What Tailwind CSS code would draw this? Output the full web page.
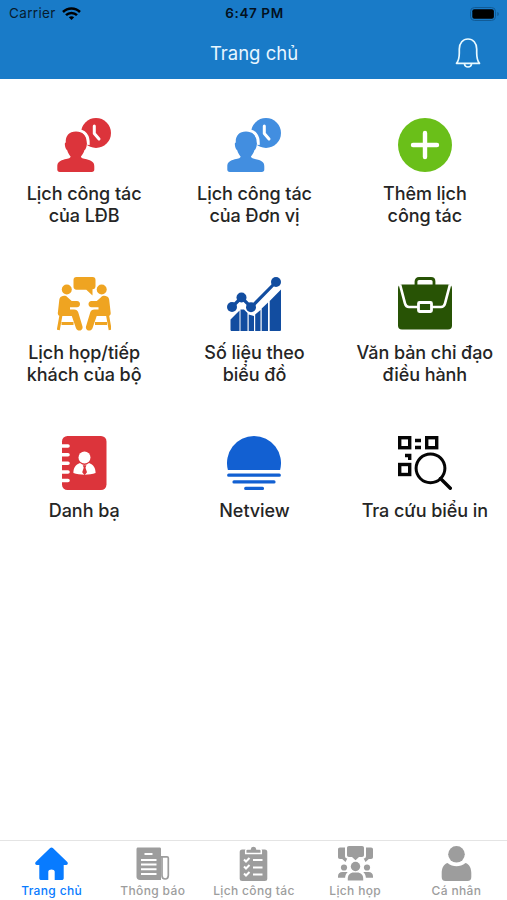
<!DOCTYPE html>
<html lang="vi">

<head>
    <meta charset="UTF-8">
    <meta name="viewport" content="width=device-width, initial-scale=1.0">
    <title>Trang chủ</title>
    <script src="https://cdn.jsdelivr.net/npm/@tailwindcss/browser@4"></script>
    <style>
        body {
            font-family: 'Inter', 'Liberation Sans', sans-serif;
        }
    </style>
</head>

<body class="bg-white h-screen flex flex-col overflow-hidden text-[#252525]">
    <!-- Header -->
    <header class="bg-[#197bc8] h-[79px] shrink-0">
        <!-- Status bar -->
        <div class="h-[27px] grid grid-cols-3 items-center pl-[9px] pr-[7px] text-[#071b2e]">
            <div class="flex items-center gap-[6px] text-[13.5px] tracking-[0.35px]">
                <span>Carrier</span>
                <svg class="w-[19px] h-[14px]" viewBox="0 0 19 14" fill="none" stroke="#000" stroke-width="2.5">
                    <path d="M1 5C5.7.3 13.3.3 18 5" />
                    <path d="M4 8.2c3-3 8-3 11 0" />
                    <path d="M6.8 10.3c1.5-1.4 3.9-1.4 5.4 0L9.5 13z" fill="#000" stroke="none" />
                </svg>
            </div>
            <div class="text-center text-[13.5px] font-semibold tracking-[0.6px] whitespace-nowrap text-[#03111e]">6:47 PM</div>
            <svg class="w-[30px] h-[14px] justify-self-end" viewBox="0 0 30 14">
                <rect x=".5" y=".5" width="25" height="13" rx="4" fill="none" stroke="#115b96" />
                <rect x="2.3" y="2.3" width="21.6" height="9.4" rx="2" />
                <path d="M27.3 5v4c2-.6 2-3.4 0-4z" fill="#115b96" />
            </svg>
        </div>
        <!-- Title -->
        <div class="h-[52px] grid grid-cols-[1fr_auto_1fr] items-center px-[26px]">
            <span></span>
            <h1 class="text-[18.5px] pt-px pl-px text-[#e8f6ff]">Trang chủ</h1>
            <svg class="w-[26px] h-[30px] justify-self-end" viewBox="0 0 26 30" fill="none" stroke="#e8f9ff" stroke-width="1.7" stroke-linejoin="round">
                <path d="M1.5 25.3C4 22.5 4.3 20.5 4.3 15V11C4.3 5 8 1 13 1s8.7 4 8.7 10v4c0 5.5.3 7.5 2.8 10.3z" />
                <path d="M9.5 26c.5 4 6.5 4 7 0" />
            </svg>
        </div>
    </header>

    <!-- Menu -->
    <main class="flex-1 -ml-px -mr-[3px] pt-[39px] grid grid-cols-3 auto-rows-[159px] text-center text-[18px] leading-[21.5px] tracking-[-0.06px] font-[460]">
        <div class="flex flex-col items-center gap-[11px]">
            <svg class="size-[54px] text-[#dc343b]" viewBox="0 0 54 54" fill="currentColor">
                <circle cx="39" cy="15" r="15" />
                <path d="M37.3 8v7.5l4.7 5.5" fill="none" stroke="#fff" stroke-width="3" stroke-linecap="round" stroke-linejoin="round" />
                <path d="M19 12.3c8.8 0 12.8 5.7 12.2 14.5" fill="none" stroke="#fff" stroke-width="3" />
                <path id="person" d="M19 13.5c-7 0-10.7 4.6-10.2 11-1 .4-1 1-.9 2.500.2 2.700 1.100 4.500 2.300 5.300.8 2.800 2 4.700 3.400 6.200-.4 2.200-3.300 2.200-7.200 3.200C1.500 43 .3 45.300.3 48.500v3c0 1.600.9 2.500 2.500 2.500h32c1.600 0 2.500-.9 2.500-2.500v-3c0-3.200-1.200-5.500-6.200-6.800-3.800-1-6.800-1-7.200-3.200 1.400-1.500 2.700-3.400 3.500-6.200 1.200-.8 2.100-2.600 2.300-5.300.1-1.500.1-2.100-.8-2.500.5-6.400-3.100-11-9.900-11z" />
            </svg>
            <p>Lịch công tác<br>của LĐB</p>
        </div>
        <div class="flex flex-col items-center gap-[11px]">
            <svg class="size-[54px] text-[#428ee0]" viewBox="0 0 54 54" fill="currentColor">
                <circle cx="39" cy="15" r="15" />
                <path d="M37.3 8v7.5l4.7 5.5" fill="none" stroke="#fff" stroke-width="3" stroke-linecap="round" stroke-linejoin="round" />
                <path d="M19 12.3c8.8 0 12.8 5.7 12.2 14.5" fill="none" stroke="#fff" stroke-width="3" />
                <use href="#person" />
            </svg>
            <p>Lịch công tác<br>của Đơn vị</p>
        </div>
        <div class="flex flex-col items-center gap-[11px]">
            <svg class="size-[54px]" viewBox="0 0 54 54">
                <circle cx="27" cy="27" r="27" fill="#6abf19" />
                <path d="M27 15v24M15 27h24" stroke="#fff" stroke-width="4.4" stroke-linecap="round" />
            </svg>
            <p>Thêm lịch<br>công tác</p>
        </div>
        <div class="flex flex-col items-center gap-[11px]">
            <svg class="size-[54px] text-[#efa421]" viewBox="0 0 54 54" fill="currentColor">
                <path d="M19.500 0h16c2 0 3 1.300 3 3v6c0 2-1 3.300-3 3.300v6.200l-6.200-5.700h-9.800c-2 0-3-1.400-3-3V3c0-1.700 1-3 3-3z" />
                <g id="sitter">
                    <circle cx="9.800" cy="12.500" r="5" />
                    <path d="M4.500 19.500c2-1.200 4.500-.9 6 .7l4.200 3.700h5.300c4 0 4 6.300 0 6.300h-7v2.300h4c2.300 0 3.700 1 4.300 3l4.200 14c1 4.300-5 5.700-6.500 1.700l-4.200-12.300H3.500C1.200 38.900.5 37.500.9 35.200l1.400-12.500c.2-1.500.9-2.500 2.200-3.200z" />
                    <path d="M4 38L1.300 53M4.500 46.500h12" fill="none" stroke="currentColor" stroke-width="3" />
                </g>
                <use href="#sitter" transform="matrix(-1 0 0 1 54.500 0)" />
            </svg>
            <p>Lịch họp/tiếp<br>khách của bộ</p>
        </div>
        <div class="flex flex-col items-center gap-[11px]">
            <svg class="size-[54px]" viewBox="0 0 54 54" fill="#124da0">
                <path d="M3.500 42.500l9-9V54H5c-1 0-1.500-.5-1.500-1.500zM13.500 32.500h3.500l3.500 3.500v18h-7zM21.700 37.500l5.300 1.500v15h-5.300zM28.200 37.500l5.300-4.500v21h-5.300zM34.700 31.500l6.300-6v28.500h-6.300zM42.700 24L54 12.500v40c0 1-.5 1.500-1.500 1.500h-9.800z" />
                <path d="M5 30L14.500 20.500l9.700 9.700L49.500 4.500" fill="none" stroke="#124da0" stroke-width="3.200" />
                <circle cx="5" cy="30" r="5" />
                <circle cx="14.500" cy="20.500" r="5" />
                <circle cx="24" cy="30.300" r="5" />
                <circle cx="49" cy="5" r="5" />
            </svg>
            <p>Số liệu theo<br>biểu đồ</p>
        </div>
        <div class="flex flex-col items-center gap-[11px]">
            <svg class="size-[54px]" viewBox="0 0 54 54" fill="#285305">
                <rect x="0" y="7.500" width="54" height="45" rx="4" />
                <path d="M18 8V4.500C18 2.600 19.200 1.500 21 1.500h12c1.800 0 3 1.100 3 3V8" fill="none" stroke="#285305" stroke-width="2.800" />
                <path d="M2 7.500l5 19c.7 2.500 1.700 3.500 4 3.500h32c2.300 0 3.300-1 4-3.500l5-19" fill="none" stroke="#fff" stroke-width="2.700" />
                <rect x="20.500" y="25.500" width="13" height="9" rx="1" stroke="#fff" stroke-width="2.800" />
            </svg>
            <p>Văn bản chỉ đạo<br>điều hành</p>
        </div>
        <div class="flex flex-col items-center gap-[10px]">
            <svg class="size-[54px]" viewBox="0 0 54 54">
                <rect x="5" width="44.500" height="54" rx="5.500" fill="#dc343b" />
                <path d="M3 10h8M3 18.700h8M3 27.300h8M3 36h8M3 44.500h8" stroke="#fff" stroke-width="3.600" stroke-linecap="round" />
                <circle cx="27.500" cy="21.500" r="6" fill="#fff" />
                <path d="M23 27c3 2.500 6 2.500 9 0 4.500 1.700 6.600 4.800 6.600 10-6 2.200-16 2.200-22.200 0 0-5.200 2.100-8.300 6.600-10z" fill="#fff" />
                <path d="M25.800 29.300h3.600l-.9 2.500 1.500 4.500-2.400 3-2.400-3 1.500-4.500z" fill="#dc343b" />
            </svg>
            <p>Danh bạ</p>
        </div>
        <div class="flex flex-col items-center gap-[10px]">
            <svg class="size-[54px]" viewBox="0 0 54 54" fill="#1260d2">
                <path d="M.9 34A27 27 0 1 1 53.100 34z" />
                <path d="M1.700 39.200h50.600M7 45.900h40M18.700 52.400h16.800" stroke="#1260d2" stroke-width="3.200" stroke-linecap="round" />
            </svg>
            <p>Netview</p>
        </div>
        <div class="flex flex-col items-center gap-[10px]">
            <svg class="size-[54px]" viewBox="0 0 54 54" fill="none" stroke="#050505" stroke-width="3.400">
                <rect x="1.700" y="1.700" width="10" height="10" />
                <rect x="28.700" y="1.700" width="10" height="10" />
                <rect x="1.700" y="28.500" width="10" height="10" />
                <path d="M17 4.500h6M17 11.500h6M7 19.500h4.700v4.500" />
                <circle cx="32.500" cy="32.300" r="14.400" stroke-width="3" />
                <path d="M42.500 42.500L52.300 52.300" stroke-linecap="round" />
            </svg>
            <p>Tra cứu biểu in</p>
        </div>
    </main>

    <!-- Tab bar -->
    <nav class="h-[60px] shrink-0 border-t-[1.5px] border-[#e4e4e4] pl-px grid grid-cols-5 pt-[5px] text-center text-[12px] leading-[16px] tracking-[0.35px] font-medium text-[#9d9d9d]">
        <div class="flex flex-col items-center gap-[2px] text-[#087bff]">
            <svg class="size-[35px]" viewBox="0 0 35 35" fill="currentColor">
                <path d="M15.900 2.200c1-.9 2.200-.9 3.200 0L33.300 16c1.100 1.300.4 2.900-1.300 2.900h-2.300v13c0 1.400-.7 2.100-2.100 2.100h-6.900V25.500c0-2.700-6.400-2.700-6.400 0V34H7.400c-1.400 0-2.100-.7-2.100-2.100v-13H3c-1.700 0-2.400-1.600-1.300-2.900z" />
            </svg>
            <span>Trang chủ</span>
        </div>
        <div class="flex flex-col items-center gap-[2px]">
            <svg class="size-[35px]" viewBox="0 0 35 35" fill="currentColor">
                <path d="M3 1.500h21.500c1.100 0 1.500.6 1.500 1.500v31H5c-2.300 0-3.500-1.400-3.500-3.500V3c0-.9.5-1.500 1.500-1.500z" />
                <path d="M9.500 8h8M6 14h15.500M6 18.500h15.500M6 23.300h15.500M6 28h15.500" stroke="#fff" stroke-width="1.900" />
                <path d="M26 10.800h6c.8 0 1.300.5 1.300 1.300v17.500c0 4.500-6.300 4.500-6.300 0V10.800" fill="none" stroke="currentColor" stroke-width="1.700" />
            </svg>
            <span>Thông báo</span>
        </div>
        <div class="flex flex-col items-center gap-[2px]">
            <svg class="size-[35px]" viewBox="0 0 35 35" fill="currentColor">
                <rect x="3.700" y="3.500" width="27.600" height="31.500" rx="2.500" />
                <path d="M9.700 7.500V4.800c0-1.200.8-1.800 1.800-1.800h2.600c.4-4 6.400-4 6.800 0h2.600c1 0 1.800.6 1.800 1.800v2.700z" stroke="#fff" stroke-width="1.500" />
                <path d="M8 13.500l2 2 3.500-3.500M8 20.500l2 2 3.500-3.500M8 27.500l2 2 3.500-3.500M17 14h9.500M17 21.500h9.500M17 28.500h9.500" fill="none" stroke="#fff" stroke-width="2" />
            </svg>
            <span>Lịch công tác</span>
        </div>
        <div class="flex flex-col items-center gap-[2px]">
            <svg class="size-[35px]" viewBox="0 0 35 35" fill="currentColor">
                <path d="M11 0h13c1.300 0 2 .7 2 2v7c0 1.300-.7 2-2 2h-3l-3.500 3.200L14 11h-3c-1.300 0-2-.7-2-2V2c0-1.300.7-2 2-2z" />
                <g id="side">
                    <path d="M2 1.500h5V10c0 1.500.8 2.300 2.300 2.600L7.500 16l-3.300-3H2c-1.300 0-2-.7-2-2V3.500c0-1.300.7-2 2-2z" />
                    <circle cx="6" cy="21.500" r="3.100" />
                    <path d="M0 31.700v-1.500c0-2.400 1.600-4.200 4.500-4.200h5.200c-1.600 1.500-2.400 3.300-2.600 5.700z" />
                </g>
                <use href="#side" transform="matrix(-1 0 0 1 35 0)" />
                <circle cx="17.500" cy="20.500" r="4.700" />
                <path d="M9.800 34.500v-2c0-3.500 2.400-6 6-6h3.400c3.600 0 6 2.500 6 6v2z" />
            </svg>
            <span>Lịch họp</span>
        </div>
        <div class="flex flex-col items-center gap-[2px]">
            <svg class="size-[35px]" viewBox="0 0 35 35" fill="currentColor">
                <circle cx="17.500" cy="8.300" r="8.300" />
                <path d="M8.500 17c5.500 4.300 12.500 4.300 18 0 4 1.300 5.800 5.300 5.800 10v4c0 2.600-1.200 4-3.800 4h-22c-2.600 0-3.800-1.400-3.800-4v-4c0-4.700 1.800-8.700 5.800-10z" />
            </svg>
            <span>Cá nhân</span>
        </div>
    </nav>
</body>

</html>
